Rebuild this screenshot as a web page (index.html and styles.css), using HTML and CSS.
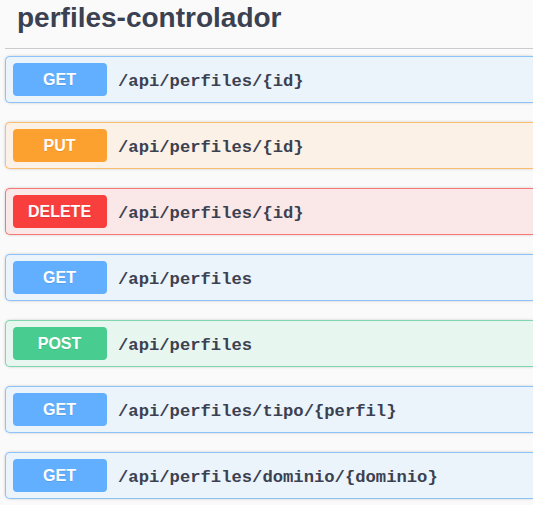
FILE: index.html
```html
<!DOCTYPE html>
<html lang="es">
<head>
<meta charset="utf-8">
<title>perfiles-controlador</title>
<link rel="stylesheet" href="styles.css">
</head>
<body>
<div class="tag-section">
  <h3 class="tag-title">perfiles-controlador</h3>
  <div class="ops">
    <div class="opblock get"><span class="method">GET</span><span class="path">/api/perfiles/{id}</span></div>
    <div class="opblock put"><span class="method">PUT</span><span class="path">/api/perfiles/{id}</span></div>
    <div class="opblock delete"><span class="method">DELETE</span><span class="path">/api/perfiles/{id}</span></div>
    <div class="opblock get"><span class="method">GET</span><span class="path">/api/perfiles</span></div>
    <div class="opblock post"><span class="method">POST</span><span class="path">/api/perfiles</span></div>
    <div class="opblock get"><span class="method">GET</span><span class="path">/api/perfiles/tipo/{perfil}</span></div>
    <div class="opblock get"><span class="method">GET</span><span class="path">/api/perfiles/dominio/{dominio}</span></div>
  </div>
</div>
</body>
</html>
```
FILE: styles.css
```css
html, body {
  margin: 0;
  padding: 0;
  background: #fafafa;
  overflow: hidden;
}
body {
  width: 533px;
  height: 505px;
}
.tag-section {
  margin-left: 5px;
  width: 528px;
}
.tag-title {
  margin: 0;
  padding: 1px 0 13px 12px;
  font-family: "Liberation Sans", Arial, sans-serif;
  font-weight: bold;
  font-size: 28px;
  line-height: 34px;
  color: #3b4151;
  border-bottom: 1px solid rgba(59, 65, 81, 0.25);
}
.ops {
  display: flex;
  flex-direction: column;
  gap: 19px;
  padding-top: 7px;
}
.opblock {
  display: flex;
  align-items: center;
  box-sizing: border-box;
  height: 47px;
  padding: 0 0 0 6.5px;
  border: 1.5px solid #61affe;
  border-right-width: 0;
  border-radius: 5px 0 0 5px;
  box-shadow: 0 0 3px rgba(0, 0, 0, 0.19);
}
.method {
  display: flex;
  align-items: center;
  justify-content: center;
  width: 94px;
  height: 33px;
  border-radius: 4px;
  color: #fff;
  font-family: "Liberation Sans", Arial, sans-serif;
  font-weight: bold;
  font-size: 16px;
  text-shadow: 0 1px 0 rgba(0, 0, 0, 0.1);
}
.path {
  padding-left: 11.5px;
  padding-top: 4px;
  font-family: "Liberation Mono", "DejaVu Sans Mono", monospace;
  font-weight: bold;
  font-size: 17.2px;
  color: #3b4151;
}
.get { background: #ebf3fb; border-color: #8cc3f9; }
.get .method { background: #61affe; }
.put { background: #fbf1e6; border-color: #fbbd72; }
.put .method { background: #fca130; }
.delete { background: #fae7e7; border-color: #f87676; }
.delete .method { background: #f93e3e; }
.post { background: #e8f6f0; border-color: #80d6af; }
.post .method { background: #49cc90; }
```
